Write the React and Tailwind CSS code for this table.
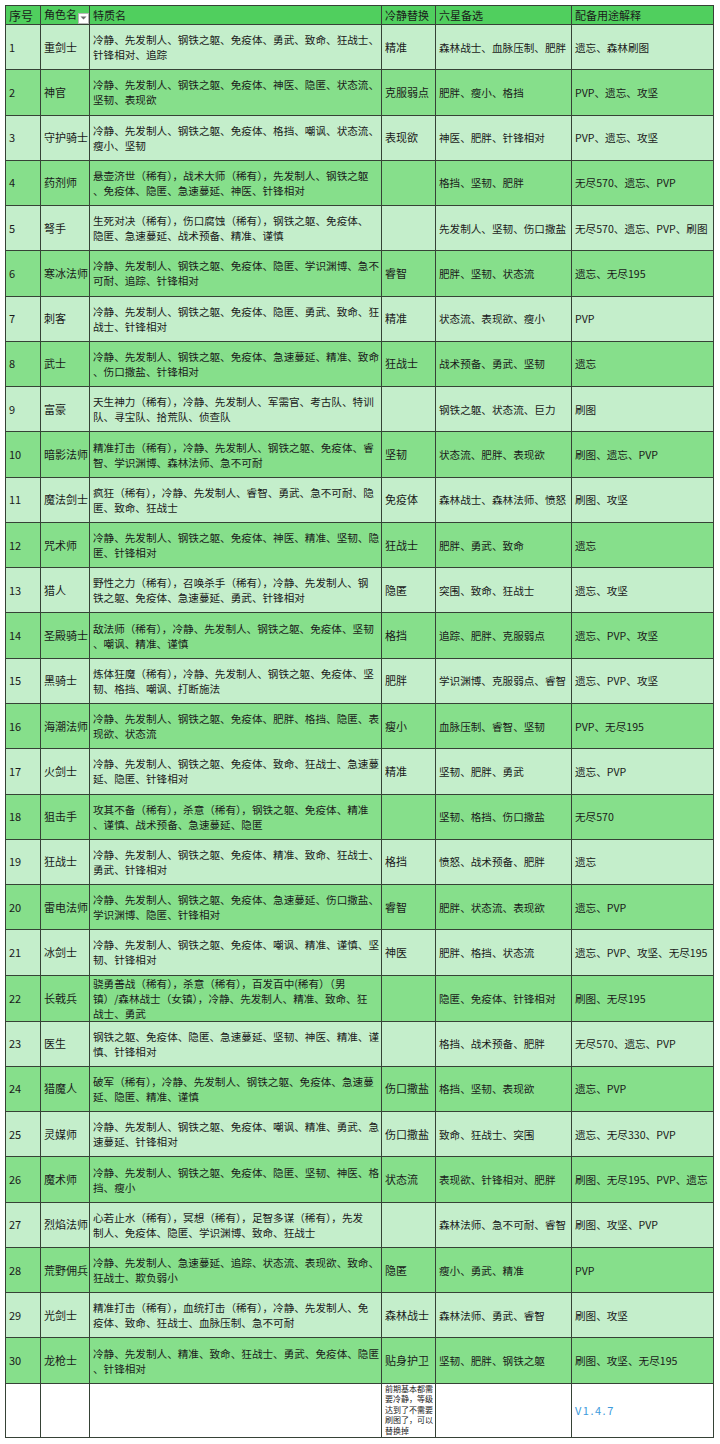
import React from 'react'

const rows = [
  [1, '重剑士', ['冷静、先发制人、钢铁之躯、免疫体、勇武、致命、狂战士、', '针锋相对、追踪'], '精准', '森林战士、血脉压制、肥胖', '遗忘、森林刷图'],
  [2, '神官', ['冷静、先发制人、钢铁之躯、免疫体、神医、隐匿、状态流、', '坚韧、表现欲'], '克服弱点', '肥胖、瘦小、格挡', 'PVP、遗忘、攻坚'],
  [3, '守护骑士', ['冷静、先发制人、钢铁之躯、免疫体、格挡、嘲讽、状态流、', '瘦小、坚韧'], '表现欲', '神医、肥胖、针锋相对', 'PVP、遗忘、攻坚'],
  [4, '药剂师', ['悬壶济世（稀有），战术大师（稀有），先发制人、钢铁之躯', '、免疫体、隐匿、急速蔓延、神医、针锋相对'], '', '格挡、坚韧、肥胖', '无尽570、遗忘、PVP'],
  [5, '弩手', ['生死对决（稀有），伤口腐蚀（稀有），钢铁之躯、免疫体、', '隐匿、急速蔓延、战术预备、精准、谨慎'], '', '先发制人、坚韧、伤口撒盐', '无尽570、遗忘、PVP、刷图'],
  [6, '寒冰法师', ['冷静、先发制人、钢铁之躯、免疫体、隐匿、学识渊博、急不', '可耐、追踪、针锋相对'], '睿智', '肥胖、坚韧、状态流', '遗忘、无尽195'],
  [7, '刺客', ['冷静、先发制人、钢铁之躯、免疫体、隐匿、勇武、致命、狂', '战士、针锋相对'], '精准', '状态流、表现欲、瘦小', 'PVP'],
  [8, '武士', ['冷静、先发制人、钢铁之躯、免疫体、急速蔓延、精准、致命', '、伤口撒盐、针锋相对'], '狂战士', '战术预备、勇武、坚韧', '遗忘'],
  [9, '富豪', ['天生神力（稀有），冷静、先发制人、军需官、考古队、特训', '队、寻宝队、拾荒队、侦查队'], '', '钢铁之躯、状态流、巨力', '刷图'],
  [10, '暗影法师', ['精准打击（稀有），冷静、先发制人、钢铁之躯、免疫体、睿', '智、学识渊博、森林法师、急不可耐'], '坚韧', '状态流、肥胖、表现欲', '刷图、遗忘、PVP'],
  [11, '魔法剑士', ['疯狂（稀有），冷静、先发制人、睿智、勇武、急不可耐、隐', '匿、致命、狂战士'], '免疫体', '森林战士、森林法师、愤怒', '刷图、攻坚'],
  [12, '咒术师', ['冷静、先发制人、钢铁之躯、免疫体、神医、精准、坚韧、隐', '匿、针锋相对'], '狂战士', '肥胖、勇武、致命', '遗忘'],
  [13, '猎人', ['野性之力（稀有），召唤杀手（稀有），冷静、先发制人、钢', '铁之躯、免疫体、急速蔓延、勇武、针锋相对'], '隐匿', '突围、致命、狂战士', '遗忘、攻坚'],
  [14, '圣殿骑士', ['敌法师（稀有），冷静、先发制人、钢铁之躯、免疫体、坚韧', '、嘲讽、精准、谨慎'], '格挡', '追踪、肥胖、克服弱点', '遗忘、PVP、攻坚'],
  [15, '黑骑士', ['炼体狂魔（稀有），冷静、先发制人、钢铁之躯、免疫体、坚', '韧、格挡、嘲讽、打断施法'], '肥胖', '学识渊博、克服弱点、睿智', '遗忘、PVP、攻坚'],
  [16, '海潮法师', ['冷静、先发制人、钢铁之躯、免疫体、肥胖、格挡、隐匿、表', '现欲、状态流'], '瘦小', '血脉压制、睿智、坚韧', 'PVP、无尽195'],
  [17, '火剑士', ['冷静、先发制人、钢铁之躯、免疫体、致命、狂战士、急速蔓', '延、隐匿、针锋相对'], '精准', '坚韧、肥胖、勇武', '遗忘、PVP'],
  [18, '狙击手', ['攻其不备（稀有），杀意（稀有），钢铁之躯、免疫体、精准', '、谨慎、战术预备、急速蔓延、隐匿'], '', '坚韧、格挡、伤口撒盐', '无尽570'],
  [19, '狂战士', ['冷静、先发制人、钢铁之躯、免疫体、精准、致命、狂战士、', '勇武、针锋相对'], '格挡', '愤怒、战术预备、肥胖', '遗忘'],
  [20, '雷电法师', ['冷静、先发制人、钢铁之躯、免疫体、急速蔓延、伤口撒盐、', '学识渊博、隐匿、针锋相对'], '睿智', '肥胖、状态流、表现欲', '遗忘、PVP'],
  [21, '冰剑士', ['冷静、先发制人、钢铁之躯、免疫体、嘲讽、精准、谨慎、坚', '韧、针锋相对'], '神医', '肥胖、格挡、状态流', '遗忘、PVP、攻坚、无尽195'],
  [22, '长戟兵', ['骁勇善战（稀有），杀意（稀有），百发百中(稀有）（男', '镇）/森林战士（女镇），冷静、先发制人、精准、致命、狂', '战士、勇武'], '', '隐匿、免疫体、针锋相对', '刷图、无尽195'],
  [23, '医生', ['钢铁之躯、免疫体、隐匿、急速蔓延、坚韧、神医、精准、谨', '慎、针锋相对'], '', '格挡、战术预备、肥胖', '无尽570、遗忘、PVP'],
  [24, '猎魔人', ['破军（稀有），冷静、先发制人、钢铁之躯、免疫体、急速蔓', '延、隐匿、精准、谨慎'], '伤口撒盐', '格挡、坚韧、表现欲', '遗忘、PVP'],
  [25, '灵媒师', ['冷静、先发制人、钢铁之躯、免疫体、嘲讽、精准、勇武、急', '速蔓延、针锋相对'], '伤口撒盐', '致命、狂战士、突围', '遗忘、无尽330、PVP'],
  [26, '魔术师', ['冷静、先发制人、钢铁之躯、免疫体、隐匿、坚韧、神医、格', '挡、瘦小'], '状态流', '表现欲、针锋相对、肥胖', '刷图、无尽195、PVP、遗忘'],
  [27, '烈焰法师', ['心若止水（稀有），冥想（稀有），足智多谋（稀有），先发', '制人、免疫体、隐匿、学识渊博、致命、狂战士'], '', '森林法师、急不可耐、睿智', '刷图、攻坚、PVP'],
  [28, '荒野佣兵', ['冷静、先发制人、急速蔓延、追踪、状态流、表现欲、致命、', '狂战士、欺负弱小'], '隐匿', '瘦小、勇武、精准', 'PVP'],
  [29, '光剑士', ['精准打击（稀有），血统打击（稀有），冷静、先发制人、免', '疫体、致命、狂战士、血脉压制、急不可耐'], '森林战士', '森林法师、勇武、睿智', '刷图、攻坚'],
  [30, '龙枪士', ['冷静、先发制人、精准、致命、狂战士、勇武、免疫体、隐匿', '、针锋相对'], '贴身护卫', '坚韧、肥胖、钢铁之躯', '刷图、攻坚、无尽195'],
]

const cell = 'border border-[#364236] px-[3px] align-middle whitespace-nowrap'

function FilterButton() {
  return (
    <span className="ml-auto flex h-[11px] w-[11px] items-center justify-center border border-[#b8b8b8] bg-white">
      <svg width="7" height="4" viewBox="0 0 7 4">
        <path d="M0.5 0.5h6L3.5 3.5z" fill="#6b6b6b" />
      </svg>
    </span>
  )
}

export default function App() {
  return (
    <div className="min-h-[1444px] w-[720px] bg-white pl-[5px] pt-[5px] font-['Noto_Sans_CJK_SC','Liberation_Sans',sans-serif] text-[#1a1a1a]">
      <table className="w-[708px] table-fixed border-collapse text-[10.6px] leading-[15px]">
        <colgroup>
          <col className="w-[35px]" />
          <col className="w-[49px]" />
          <col className="w-[292px]" />
          <col className="w-[54px]" />
          <col className="w-[136px]" />
          <col className="w-[142px]" />
        </colgroup>
        <thead>
          <tr className="h-[19px] bg-[#50cf5e] text-[11px]">
            <th className={cell + ' text-left font-normal text-[12px]'}>序号</th>
            <th className={cell + ' pr-0 pb-0 text-left font-normal'}>
              <div className="flex items-end">
                <span className="pb-[2px]">角色名</span>
                <FilterButton />
              </div>
            </th>
            <th className={cell + ' text-left font-normal'}>特质名</th>
            <th className={cell + ' text-left font-normal'}>冷静替换</th>
            <th className={cell + ' text-left font-normal'}>六星备选</th>
            <th className={cell + ' text-left font-normal'}>配备用途解释</th>
          </tr>
        </thead>
        <tbody>
          {rows.map(([no, name, traits, calm, six, use], i) => (
            <tr key={no} className={'h-[45.27px] ' + (i % 2 === 0 ? 'bg-[#c4eecb]' : 'bg-[#86df8b]')}>
              <td className={cell + ' text-[11px]'}>{no}</td>
              <td className={cell + ' text-[11px]'}>{name}</td>
              <td className={cell}>
                {traits.map((line, j) => (
                  <div key={j}>{line}</div>
                ))}
              </td>
              <td className={cell + ' text-[11px]'}>{calm}</td>
              <td className={cell}>{six}</td>
              <td className={cell}>{use}</td>
            </tr>
          ))}
          <tr className="h-[54px] bg-white">
            <td className={cell}></td>
            <td className={cell}></td>
            <td className={cell}></td>
            <td className={cell + ' text-[8px] leading-[10.5px]'}>
              <div>前期基本都需</div>
              <div>要冷静，等级</div>
              <div>达到了不需要</div>
              <div>刷图了，可以</div>
              <div>替换掉</div>
            </td>
            <td className={cell}></td>
            <td className={cell + ' text-[11px] tracking-[1.5px] text-[#3d9bdc]'}>V1.4.7</td>
          </tr>
        </tbody>
      </table>
    </div>
  )
}
